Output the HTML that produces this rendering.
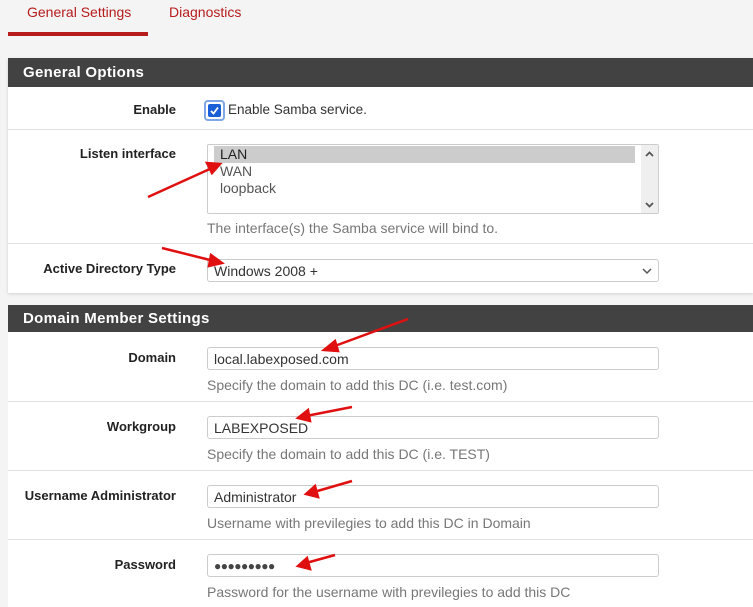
<!DOCTYPE html>
<html><head><style>
body{margin:0;width:753px;height:607px;overflow:hidden;background:#f4f4f4;font-family:"Liberation Sans",sans-serif;position:relative}
.a{position:absolute}
.tab{color:#b71c1c;font-size:14px}
.hdr{position:absolute;left:8px;right:0;background:#424242;color:#fff;font-weight:bold;font-size:15px;padding-left:15px;box-sizing:border-box;letter-spacing:.3px}
.body{position:absolute;left:8px;right:0;background:#fff}
.sep{position:absolute;left:8px;right:0;height:1px;background:#e2e2e2}
.lbl{position:absolute;right:577px;font-weight:bold;font-size:13px;color:#222;text-align:right;white-space:nowrap}
.inp{position:absolute;left:207px;width:452px;height:23px;border:1px solid #ccc;border-radius:3px;background:#fff;font-size:14px;color:#333;box-sizing:border-box;padding:3px 6px;line-height:16px}
.help{position:absolute;left:207px;font-size:14px;color:#777}
</style></head><body>
<div class="a tab" style="left:27px;top:4px">General Settings</div>
<div class="a tab" style="left:169px;top:4px">Diagnostics</div>
<div class="a" style="left:8px;top:32px;width:140px;height:4px;background:#b71c1c"></div>

<div class="body" style="top:58px;height:235px;box-shadow:0 1px 3px rgba(0,0,0,.15)"></div>
<div class="hdr" style="top:58px;height:29px;line-height:29px">General Options</div>
<div class="lbl" style="top:102px">Enable</div>
<div class="a" style="left:204px;top:100px;width:21px;height:21px;border:2px solid #7fa6e6;border-radius:4px;box-sizing:border-box;padding:2px"><div style="width:13px;height:13px;background:#1a5fd6;border-radius:2px;position:relative"><svg width="13" height="13" style="position:absolute;left:0;top:0"><path d="M3 7L5.5 9.5L10 3.5" stroke="#fff" stroke-width="1.8" fill="none"/></svg></div></div>
<div class="a" style="left:228px;top:102px;font-size:13.5px;color:#333">Enable Samba service.</div>
<div class="sep" style="top:129px"></div>
<div class="lbl" style="top:146px">Listen interface</div>
<div class="a" style="left:207px;top:144px;width:452px;height:70px;border:1px solid #ccc;box-sizing:border-box;border-radius:2px;background:#fff;font-size:14px;color:#555">
<div style="position:absolute;left:6px;top:1px;width:421px;height:17px;background:#ccc"></div>
<div style="position:absolute;left:12px;top:1px;line-height:17px;color:#222">LAN</div>
<div style="position:absolute;left:12px;top:18px;line-height:17px">WAN</div>
<div style="position:absolute;left:12px;top:35px;line-height:17px">loopback</div>
<div style="position:absolute;right:0;top:0;width:17px;height:68px;background:#efefef">
<svg width="17" height="68"><path d="M5 11L8.5 7.5L12 11M5 58L8.5 61.5L12 58" stroke="#555" stroke-width="1.8" fill="none"/></svg></div>
</div>
<div class="help" style="top:220px">The interface(s) the Samba service will bind to.</div>
<div class="sep" style="top:243px"></div>
<div class="lbl" style="top:261px">Active Directory Type</div>
<div class="inp" style="top:259px">Windows 2008 +<svg style="position:absolute;right:6px;top:7px" width="10" height="8"><path d="M1 2L5 6L9 2" stroke="#555" stroke-width="1.5" fill="none"/></svg></div>

<div class="body" style="top:305px;height:302px"></div>
<div class="hdr" style="top:305px;height:27px;line-height:27px">Domain Member Settings</div>
<div class="lbl" style="top:350px">Domain</div>
<div class="inp" style="top:347px">local.labexposed.com</div>
<div class="help" style="top:377px">Specify the domain to add this DC (i.e. test.com)</div>
<div class="sep" style="top:401px"></div>
<div class="lbl" style="top:419px">Workgroup</div>
<div class="inp" style="top:416px">LABEXPOSED</div>
<div class="help" style="top:446px">Specify the domain to add this DC (i.e. TEST)</div>
<div class="sep" style="top:470px"></div>
<div class="lbl" style="top:488px">Username Administrator</div>
<div class="inp" style="top:485px">Administrator</div>
<div class="help" style="top:515px">Username with previlegies to add this DC in Domain</div>
<div class="sep" style="top:539px"></div>
<div class="lbl" style="top:557px">Password</div>
<div class="inp" style="top:554px;font-size:12px;letter-spacing:-0.5px;color:#444;line-height:16px">●●●●●●●●●</div>
<div class="help" style="top:584px">Password for the username with previlegies to add this DC</div>

<svg class="a" style="left:0;top:0" width="753" height="607">
<g stroke="#e01010" stroke-width="2.5" fill="#e01010">
<line x1="148" y1="197" x2="212" y2="168"/><path d="M220 164L207 163L212 173Z"/>
<line x1="162" y1="248" x2="214" y2="261"/><path d="M222 263L211 255L209 266Z"/>
<line x1="408" y1="319" x2="332" y2="347"/><path d="M324 350L335 341L338 351Z"/>
<line x1="352" y1="407" x2="306" y2="416"/><path d="M298 418L308 410L310 421Z"/>
<line x1="352" y1="481" x2="314" y2="492"/><path d="M306 494L315 486L318 497Z"/>
<line x1="335" y1="555" x2="306" y2="563"/><path d="M298 566L307 558L310 569Z"/>
</g></svg>
</body></html>
